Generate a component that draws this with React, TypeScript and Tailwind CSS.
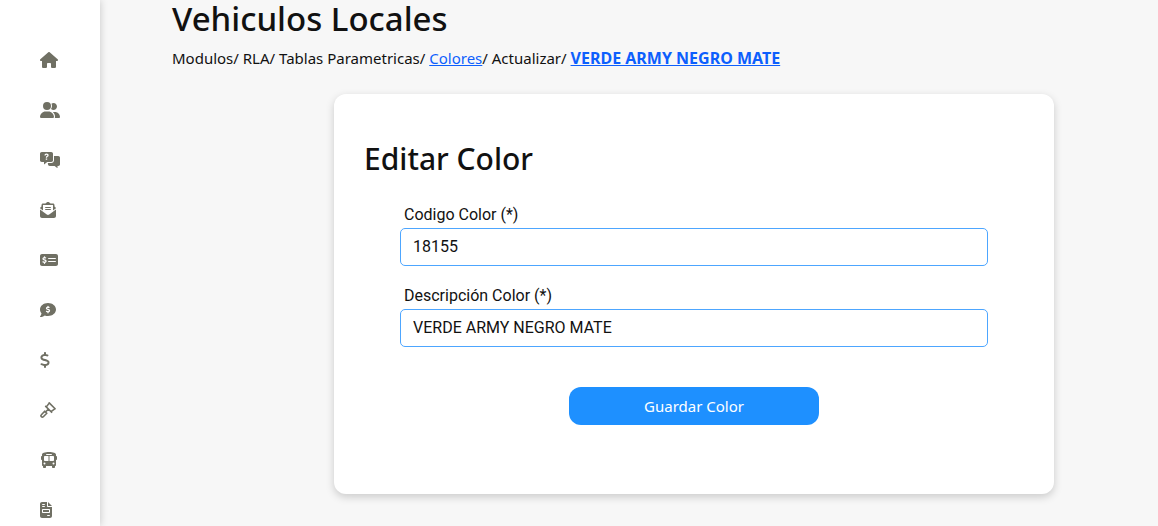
import { useState } from 'react';
import type { ReactNode } from 'react';
import {
  FaBus,
  FaCommentDollar,
  FaDollarSign,
  FaEnvelopeOpenText,
  FaFileInvoice,
  FaHouse,
  FaMoneyCheckDollar,
  FaUserGroup,
} from 'react-icons/fa6';

const MessagesQuestion = () => (
  <svg viewBox="0 0 640 512" className="h-4 w-5" fill="currentColor">
    <path
      fillRule="evenodd"
      d="M56 0h304c31 0 56 25 56 56v208c0 31-25 56-56 56H232l-92 74c-6 5-12 2-12-6v-68H56c-31 0-56-25-56-56V56C0 25 25 0 56 0zM143 108h38c0-15 10-24 27-24 16 0 27 8 27 21 0 10-5 15-19 23-19 11-28 22-28 44v10h39v-6c0-10 5-14 18-22 20-12 31-28 31-50 0-35-28-58-68-58-40 0-65 24-65 62zM184 206h46v44h-46z"
    />
    <path d="M448 128h136c31 0 56 25 56 56v208c0 31-25 56-56 56h-24v58c0 6-6 8-11 4l-81-62H312c-31 0-56-25-56-56v-16l-10-24h114c48 0 88-40 88-88V128z" />
  </svg>
);

const GavelOutline = () => (
  <svg
    viewBox="0 0 16 16"
    className="size-4"
    fill="none"
    stroke="currentColor"
    strokeWidth="1.6"
    strokeLinecap="round"
    strokeLinejoin="round"
  >
    <path d="M9.2.9 15.1 6.8M5.7 4.4l5.9 5.9M8.8 1.6 6.4 4.9M14.4 7.2l-3.3 2.4M8.3 7.2 6 9.5" />
    <path d="M4.7 9.2 6.8 11.3 3.3 14.7c-.6.6-1.3.6-1.9 0s-.6-1.3 0-1.9z" />
  </svg>
);

const menu: { name: string; icon: ReactNode }[] = [
  { name: 'Inicio', icon: <FaHouse className="h-4 w-[18px]" /> },
  { name: 'Usuarios', icon: <FaUserGroup className="h-4 w-5" /> },
  { name: 'Consultas', icon: <MessagesQuestion /> },
  { name: 'Correo', icon: <FaEnvelopeOpenText className="size-4" /> },
  { name: 'Pagos', icon: <FaMoneyCheckDollar className="h-4 w-[18px]" /> },
  { name: 'Cobros', icon: <FaCommentDollar className="size-4" /> },
  { name: 'Tarifas', icon: <FaDollarSign className="h-4 w-[10px]" /> },
  { name: 'Remates', icon: <GavelOutline /> },
  { name: 'Vehiculos', icon: <FaBus className="h-4 w-[18px]" /> },
  { name: 'Documentos', icon: <FaFileInvoice className="h-4 w-3" /> },
];

const Sidebar = () => (
  <nav className="h-screen w-[100px] shrink-0 overflow-hidden bg-white pt-[35px] shadow-[0_0_8px_rgba(0,0,0,0.2)]">
    <ul>
      {menu.map((item) => (
        <li key={item.name}>
          <a
            href="#"
            aria-label={item.name}
            className="flex h-[50px] items-center pl-10 text-[#707064]"
          >
            {item.icon}
          </a>
        </li>
      ))}
    </ul>
  </nav>
);

type FieldProps = {
  id: string;
  label: string;
  value: string;
  onChange: (value: string) => void;
};

const Field = ({ id, label, value, onChange }: FieldProps) => (
  <div>
    <label htmlFor={id} className="mb-px block pl-1 text-base">
      {label}
    </label>
    <input
      id={id}
      type="text"
      value={value}
      onChange={(e) => onChange(e.target.value)}
      className="h-[38px] w-full rounded-[5px] border border-[#4da6ff] bg-white px-3 pb-0.5 text-base outline-none"
    />
  </div>
);

const App = () => {
  const [codigo, setCodigo] = useState('18155');
  const [descripcion, setDescripcion] = useState('VERDE ARMY NEGRO MATE');

  return (
    <div className="flex min-h-screen bg-[#f7f7f7] font-['Noto_Sans',sans-serif] text-[#111]">
      <Sidebar />
      <main className="min-w-0 flex-1 pl-[72px]">
        <h1 className="text-[33px] leading-[38px] font-medium">Vehiculos Locales</h1>
        <p className="mt-2 text-[15px] leading-6">
          Modulos/ RLA/ Tablas Parametricas/{' '}
          <a href="#" className="text-[#0d5ffd] underline">
            Colores
          </a>
          / Actualizar/{' '}
          <a href="#" className="text-base font-bold text-[#0d5ffd] underline">
            VERDE ARMY NEGRO MATE
          </a>
        </p>

        <div className="mt-6 flex justify-center pl-[58px]">
          <form
            onSubmit={(e) => e.preventDefault()}
            className="min-h-[400px] w-full max-w-[720px] rounded-xl bg-white px-[30px] pt-[45px] shadow-[0_3px_8px_rgba(0,0,0,0.18)]"
          >
            <h2 className="text-[30px] leading-10 font-medium">Editar Color</h2>
            <div className="mt-6 flex flex-col gap-[18px] px-9 font-[Roboto,sans-serif]">
              <Field id="codigo" label="Codigo Color (*)" value={codigo} onChange={setCodigo} />
              <Field
                id="descripcion"
                label="Descripción Color (*)"
                value={descripcion}
                onChange={setDescripcion}
              />
            </div>
            <div className="mt-10 flex justify-center">
              <button
                type="submit"
                className="h-[38px] w-[250px] rounded-xl bg-[#1e90ff] text-[15px] text-white"
              >
                Guardar Color
              </button>
            </div>
          </form>
        </div>
      </main>
    </div>
  );
};

export default App;
